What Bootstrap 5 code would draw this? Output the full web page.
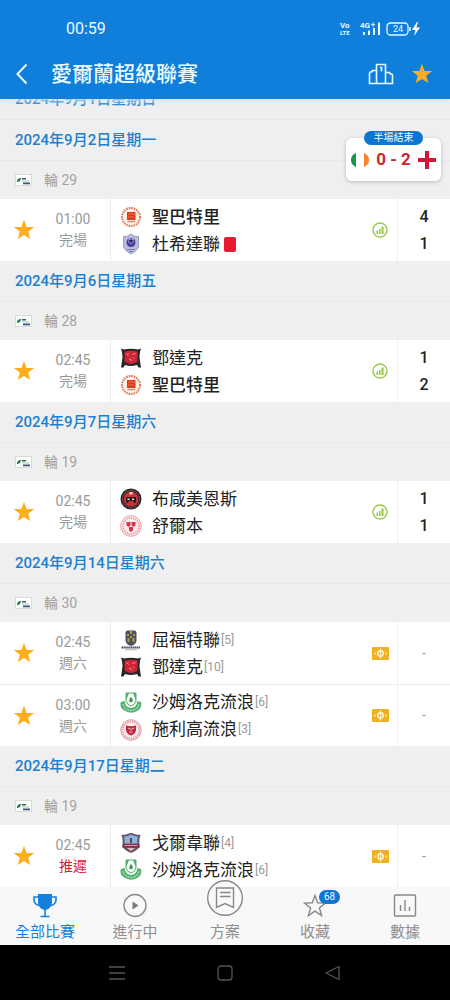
<!DOCTYPE html>
<html lang="zh-Hant">
<head>
<meta charset="utf-8">
<meta name="viewport" content="width=device-width, initial-scale=1">
<title>愛爾蘭超級聯賽</title>
<link href="https://cdn.jsdelivr.net/npm/bootstrap@5.3.0/dist/css/bootstrap.min.css" rel="stylesheet">
<style>
  body { font-family: Roboto, "Noto Sans CJK TC", sans-serif; color: #222; background: #fff; height: 100vh; overflow: hidden; }
  svg { display: block; flex: none; }
  button { background: none; border: 0; padding: 0; color: inherit; }
  a { color: inherit; text-decoration: none; }
  .topbar { background: #0f7fdb; color: #e9fbff; box-shadow: 0 2px 6px #cfe5f7; z-index: 3; }
  .statusbar { height: 58px; padding: 0 28px 0 66px; font-size: 16px; }
  .titlebar { height: 41px; padding: 0 16px 10px; }
  .titlebar h1 { font-size: 21px; line-height: 30px; font-weight: 500; padding-left: 15px; }
  .feed { min-height: 0; }
  .day { height: 41px; padding: 0 15px; background: #efefef; border-bottom: 1px solid #e9e9e9; color: #1c80cf; font-size: 15px; font-weight: 500; margin: 0; flex: none; }
  .round { height: 38px; padding: 0 15px; background: #efefef; color: #a2a2a2; font-size: 14px; gap: 12px; flex: none; }
  .fixture { height: 62px; background: #fff; flex: none; }
  .fixture + .fixture { border-top: 1px solid #eee; }
  .fav { width: 48px; }
  .when { width: 50px; color: #999; font-size: 14px; line-height: 21px; }
  .late { color: #e0182d; }
  .teams { border-left: 1px solid #eee; margin-left: 12px; padding: 1px 0 0 9px; min-width: 0; }
  .team { height: 27px; font-size: 17px; line-height: 27px; gap: 10px; white-space: nowrap; }
  .team.won { font-weight: 500; }
  .rank { color: #999; font-size: 12px; margin-left: -9px; font-weight: 400; }
  .redcard { width: 12px; height: 15px; border-radius: 2px; background: #e31b33; margin-left: -6px; }
  .info { width: 34px; }
  .score { width: 53px; border-left: 1px solid #f0f0f0; font-size: 16px; line-height: 27px; font-weight: 500; }
  .pending { color: #999; font-size: 14px; font-weight: 400; }
  .live { position: absolute; right: 9px; top: 39px; width: 95px; height: 43px; background: #fff; border-radius: 6px; box-shadow: 0 1px 4px #bbb; z-index: 2; }
  .live-score { color: #c62834; font-size: 17px; font-weight: 700; white-space: nowrap; }
  .live-state { position: absolute; top: -7px; left: 18px; right: 18px; height: 14px; line-height: 14px; border-radius: 7px; background: #0f76cf; color: #e9fbff; font-size: 10px; text-align: center; }
  .tabs { background: #f8f8f8; height: 58px; color: #8e8e8e; font-size: 15px; z-index: 2; }
  .tabs a { flex: 1 1 0; line-height: 20px; padding-bottom: 3px; position: relative; }
  .tabs .picked { color: #1280dc; }
  .tabs svg { margin-bottom: 4px; }
  .count { position: absolute; left: 50%; top: 3px; margin-left: 4px; width: 21px; height: 14px; line-height: 14px; border-radius: 7px; background: #0f76cf; color: #e9fbff; font-size: 10px; text-align: center; }
  .sysnav { background: #000; height: 55px; color: #555; }
  .sysnav button { width: 24px; margin: 0 42px; }
</style>
</head>
<body class="d-flex flex-column">

<svg width="0" height="0" class="position-absolute" aria-hidden="true">
  <symbol id="star" viewBox="0 0 22 22"><path fill="#fcae1c" d="M11 .8l2.600 7.100 7.600.2-6 4.700 2.100 7.300L11 15.900l-6.300 4.200 2.100-7.300-6-4.700 7.600-.2z"/></symbol>
  <symbol id="league" viewBox="0 0 17 12"><rect x=".5" y=".5" width="16" height="11" fill="#fcfffc" stroke="#d8ded4"/><path fill="#177b42" d="M2 8q0-4 4-4-.5 4-4 4z"/><path fill="#456" d="M7 4h4v1.500H7z"/><path fill="#a9c9b5" d="M7 6.500h7v1H7z"/><path fill="#3c4f92" d="M8 8.500h7v1.800H8z"/></symbol>
  <symbol id="stats" viewBox="0 0 16 16"><circle cx="8" cy="8" r="7" fill="none" stroke="#9ccb4f" stroke-width="1.400"/><path fill="#8fc63d" d="M4.500 8.500h1.500V12H4.500zM7 7h1.500v5H7zM9.500 4.500h2V12h-2z"/></symbol>
  <symbol id="odds" viewBox="0 0 17 13"><rect width="17" height="13" rx="1" fill="#f0b023"/><circle cx="8.500" cy="6.500" r="2.700" fill="none" stroke="#fff3c8" stroke-width="1.500"/><path d="M8.500 1.500v10M3 5.500v2M14 5.500v2" stroke="#fff3c8" stroke-width="1.300"/></symbol>
  <symbol id="patrick" viewBox="0 0 22 22"><circle cx="11" cy="11" r="10.300" fill="#fdeee6"/><circle cx="11" cy="11" r="9" fill="none" stroke="#e2765c" stroke-width="2" stroke-dasharray="1.500 1"/><path fill="#dd3a22" d="M7 6h8.500v8H7z"/><path d="M8 8.500l3-1 4 1M8 11h6" stroke="#f38a55" stroke-width=".7" fill="none"/><path fill="#e47a60" d="M7.500 15h7.500v1.200H7.500z"/></symbol>
  <symbol id="drogheda" viewBox="0 0 22 22"><path fill="#b9bbe3" stroke="#98a0b4" d="M3.500 3.500Q8 4 11 1q3 3 7.500 2.500V14q-1.500 4-7.500 7-6-3-7.500-7z"/><circle cx="11" cy="9.500" r="4.500" fill="#473a94"/><circle cx="11" cy="8" r="2.700" fill="#c9c5ee"/><path fill="#3a2876" d="M11 5l1 2 2 .2-1.500 1.300.5 2-2-1-2 1 .5-2L8 7.200 10 7z"/><path stroke="#777bb0" d="M7 16.500h8M9 18.500h4"/></symbol>
  <symbol id="dundalk" viewBox="0 0 22 22"><path fill="#29262a" d="M1 1.500l3 1q7-1.500 14 0l3-1-1 3.500q-1 5 0 9l1 6.500h-2.500L17 18q-6 2-12 0l-1.500 2.500H1L2 14q1-4 0-9z"/><path fill="#cf2637" d="M4.500 4.500q6.500-1.500 13 0v9.500q-1 2-6.500 3-5.500-1-6.500-3z"/><path stroke="#f29a9d" fill="none" d="M6.500 6.500l2 2M8.500 6.500l-1.500 1.500M12.500 7.500l3-1M9 12l3 1.500M13 10.500l1 1"/></symbol>
  <symbol id="bohs" viewBox="0 0 22 22"><circle cx="11" cy="11" r="10.500" fill="#30272a"/><circle cx="11" cy="11" r="8.500" fill="none" stroke="#a35a57" stroke-dasharray="1.500 1"/><circle cx="11" cy="11" r="7.300" fill="#d32f37"/><path fill="#211f22" d="M6 9h10v5.500l-2 .5-1-2H9l-1 2-2-.5z"/><path fill="#f6d5d2" d="M9.500 4h3v2.500h-3zM7.500 10.500h2v1.500h-2zM12 10.500h2v1.500h-2z"/></symbol>
  <symbol id="shels" viewBox="0 0 22 22"><circle cx="11" cy="11" r="10.300" fill="#fdeced" stroke="#ee9ba2"/><circle cx="11" cy="11" r="8" fill="none" stroke="#ea858e" stroke-width="1.500" stroke-dasharray="1.200 1"/><path fill="#d3364b" d="M6.500 7h4v3.500l-2 1.500-2-1.500zM11.500 7h4v3.500l-2 1.500-2-1.500zM9 12h4v3.500L11 17l-2-1.500z"/></symbol>
  <symbol id="waterford" viewBox="0 0 22 22"><path fill="#4d5061" d="M5.500 3L7 1.500h8L16.500 3v9q-1 4-5.500 5-4.500-1-5.500-5z"/><path fill="#b29a4b" d="M7 5h2v2H7zM13 5h2v2h-2zM10 2h2v3h-2zM7.500 9h2v4h-2zM12.500 9h2v4h-2zM10 7h2v2h-2z"/><path stroke="#4e5263" stroke-width="1.800" stroke-dasharray="1.500 .4" d="M1.500 18.500h19"/><path stroke="#aeb4c2" d="M5 20.700h12"/></symbol>
  <symbol id="rovers" viewBox="0 0 22 22"><path fill="#f4fff5" stroke="#54aa6e" d="M6 1h10v8q-1 4-5 5-4-1-5-5z"/><path fill="#4fae69" d="M6 1h3L7.500 5 6 8zM13 1h3v7l-1.500-3z"/><path fill="#3d8e55" d="M9.500 7l1.500-2 1.500 2v3h-3z"/><path fill="#57b473" d="M.8 10l4-1q0 6 6.200 7 6.200-1 6.200-7l4 1q1 6-4 9-6 3.500-12 0-6-3-4.400-9z"/><path stroke="#e7fbea" stroke-dasharray="1.500 1" fill="none" d="M3 12.500q2 6 8 6t8-6"/></symbol>
  <symbol id="sligo" viewBox="0 0 22 22"><circle cx="11" cy="11" r="10.300" fill="#fcebed" stroke="#dda0a7"/><circle cx="11" cy="11" r="8.500" fill="none" stroke="#d9858f" stroke-width="1.800" stroke-dasharray="1.200 1.200"/><path fill="#c4263d" d="M6 6.500q5 1.500 10 0v5q-1 4-5 5-4-1-5-5z"/><path stroke="#f0c4c6" fill="none" d="M8 9l3 1.500L14 9M9.500 13h3"/></symbol>
  <symbol id="galway" viewBox="0 0 22 22"><path fill="#6d5165" d="M1.500 3Q6 3 11 .8 16 3 20.500 3q-2 5-.5 12-4 4-9 6-5-2-9-6 1.500-7-.5-12z"/><path fill="#86b6df" d="M4 4.500q4 0 7-2 3 2 7 2-1 3-.5 7H4.500q.5-4-.5-7z"/><path fill="#8d2e49" d="M3 12h16v3.500H3zM10 6h2v5h-2z"/><path fill="#e2bcc6" d="M7 16h8l-4 3zM4.500 13.300h13v.8h-13z"/></symbol>
</svg>

<header class="topbar position-relative flex-shrink-0">
  <div class="statusbar d-flex align-items-center justify-content-between">
    <span>00:59</span>
    <svg width="82" height="16" viewBox="0 0 82 16" fill="none" stroke="#e9fbff" role="img" aria-label="VoLTE 4G+ 24%">
      <g fill="#e9fbff" stroke="none" font-family="Roboto" font-weight="700"><text x="0" y="7" font-size="8">Vo</text><text x="0" y="14" font-size="6">LTE</text><text x="20" y="7" font-size="8">4G</text><text x="31" y="6" font-size="7">+</text><text x="53" y="11" font-size="9" font-weight="400">24</text></g>
      <path stroke-width="2" d="M24 14v-3M29 14V9.500M34 14V7M39 14V1.500"/>
      <rect x="47" y="2" width="21" height="12" rx="3.500" stroke-width="1.300"/><path stroke-width="1.500" d="M70 6v4"/>
      <path fill="#fff" stroke="none" d="M77 1l-5 8h3.500L74 15l6-8.500h-3.600L78 1z"/>
    </svg>
  </div>
  <div class="titlebar d-flex align-items-center">
    <button type="button" aria-label="返回"><svg width="20" height="22" viewBox="0 0 20 22" fill="none" stroke="#e9fbff" stroke-width="2"><path d="M10.500 1.500L1.500 11l9 9.500"/></svg></button>
    <h1 class="mb-0 me-auto">愛爾蘭超級聯賽</h1>
    <button type="button" aria-label="排名" class="me-3"><svg width="26" height="22" viewBox="0 0 26 22" fill="none" stroke="#e9fbff" stroke-width="1.600"><path d="M8.500 20.500V1.500h9v19M8.500 7.500H4.500q0 1.500-2 1.500-1 0-1 1v10.500h23V12q0-1-1-1-2 0-2-1.500h-4M12 4.500h1.500v4"/></svg></button>
    <button type="button" aria-label="已收藏"><svg width="24" height="22"><use href="#star"/></svg></button>
  </div>
</header>

<main class="feed flex-grow-1 position-relative d-flex">
  <aside class="live d-flex align-items-center justify-content-between px-1">
    <span class="live-state">半場結束</span>
    <svg width="20" height="20" viewBox="0 0 20 20"><path fill="#17964e" d="M6 3v14Q1 15 1 10t5-7z"/><path fill="#f3892f" d="M14 3v14q5-2 5-7t-5-7z"/></svg>
    <span class="live-score">0 - 2</span>
    <svg width="20" height="20" viewBox="0 0 20 20"><path fill="#d31635" d="M8 1h4v7h7v4h-7v7H8v-7H1V8h7z"/></svg>
  </aside>

  <div class="flex-grow-1 overflow-hidden d-flex flex-column justify-content-end">
    <h2 class="day d-flex align-items-center">2024年9月1日星期日</h2>

    <h2 class="day d-flex align-items-center">2024年9月2日星期一</h2>
    <div class="round d-flex align-items-center"><svg width="17" height="12"><use href="#league"/></svg>輪 29</div>
    <article class="fixture d-flex align-items-center">
      <button type="button" class="fav d-flex justify-content-center" aria-label="收藏"><svg width="22" height="22"><use href="#star"/></svg></button>
      <div class="when text-center">01:00<br>完場</div>
      <div class="teams flex-grow-1 align-self-stretch d-flex flex-column justify-content-center">
        <div class="team won d-flex align-items-center"><svg width="22" height="22"><use href="#patrick"/></svg>聖巴特里</div>
        <div class="team d-flex align-items-center"><svg width="22" height="22"><use href="#drogheda"/></svg>杜希達聯<span class="redcard"></span></div>
      </div>
      <div class="info d-flex justify-content-center"><svg width="16" height="16"><use href="#stats"/></svg></div>
      <div class="score align-self-stretch d-flex flex-column justify-content-center text-center"><span>4</span><span>1</span></div>
    </article>

    <h2 class="day d-flex align-items-center">2024年9月6日星期五</h2>
    <div class="round d-flex align-items-center"><svg width="17" height="12"><use href="#league"/></svg>輪 28</div>
    <article class="fixture d-flex align-items-center">
      <button type="button" class="fav d-flex justify-content-center" aria-label="收藏"><svg width="22" height="22"><use href="#star"/></svg></button>
      <div class="when text-center">02:45<br>完場</div>
      <div class="teams flex-grow-1 align-self-stretch d-flex flex-column justify-content-center">
        <div class="team d-flex align-items-center"><svg width="22" height="22"><use href="#dundalk"/></svg>鄧達克</div>
        <div class="team won d-flex align-items-center"><svg width="22" height="22"><use href="#patrick"/></svg>聖巴特里</div>
      </div>
      <div class="info d-flex justify-content-center"><svg width="16" height="16"><use href="#stats"/></svg></div>
      <div class="score align-self-stretch d-flex flex-column justify-content-center text-center"><span>1</span><span>2</span></div>
    </article>

    <h2 class="day d-flex align-items-center">2024年9月7日星期六</h2>
    <div class="round d-flex align-items-center"><svg width="17" height="12"><use href="#league"/></svg>輪 19</div>
    <article class="fixture d-flex align-items-center">
      <button type="button" class="fav d-flex justify-content-center" aria-label="收藏"><svg width="22" height="22"><use href="#star"/></svg></button>
      <div class="when text-center">02:45<br>完場</div>
      <div class="teams flex-grow-1 align-self-stretch d-flex flex-column justify-content-center">
        <div class="team d-flex align-items-center"><svg width="22" height="22"><use href="#bohs"/></svg>布咸美恩斯</div>
        <div class="team d-flex align-items-center"><svg width="22" height="22"><use href="#shels"/></svg>舒爾本</div>
      </div>
      <div class="info d-flex justify-content-center"><svg width="16" height="16"><use href="#stats"/></svg></div>
      <div class="score align-self-stretch d-flex flex-column justify-content-center text-center"><span>1</span><span>1</span></div>
    </article>

    <h2 class="day d-flex align-items-center">2024年9月14日星期六</h2>
    <div class="round d-flex align-items-center"><svg width="17" height="12"><use href="#league"/></svg>輪 30</div>
    <article class="fixture d-flex align-items-center">
      <button type="button" class="fav d-flex justify-content-center" aria-label="收藏"><svg width="22" height="22"><use href="#star"/></svg></button>
      <div class="when text-center">02:45<br>週六</div>
      <div class="teams flex-grow-1 align-self-stretch d-flex flex-column justify-content-center">
        <div class="team d-flex align-items-center"><svg width="22" height="22"><use href="#waterford"/></svg>屈福特聯<span class="rank">[5]</span></div>
        <div class="team d-flex align-items-center"><svg width="22" height="22"><use href="#dundalk"/></svg>鄧達克<span class="rank">[10]</span></div>
      </div>
      <div class="info d-flex justify-content-center"><svg width="17" height="13"><use href="#odds"/></svg></div>
      <div class="score pending align-self-stretch d-flex flex-column justify-content-center text-center">-</div>
    </article>
    <article class="fixture d-flex align-items-center">
      <button type="button" class="fav d-flex justify-content-center" aria-label="收藏"><svg width="22" height="22"><use href="#star"/></svg></button>
      <div class="when text-center">03:00<br>週六</div>
      <div class="teams flex-grow-1 align-self-stretch d-flex flex-column justify-content-center">
        <div class="team d-flex align-items-center"><svg width="22" height="22"><use href="#rovers"/></svg>沙姆洛克流浪<span class="rank">[6]</span></div>
        <div class="team d-flex align-items-center"><svg width="22" height="22"><use href="#sligo"/></svg>施利高流浪<span class="rank">[3]</span></div>
      </div>
      <div class="info d-flex justify-content-center"><svg width="17" height="13"><use href="#odds"/></svg></div>
      <div class="score pending align-self-stretch d-flex flex-column justify-content-center text-center">-</div>
    </article>

    <h2 class="day d-flex align-items-center">2024年9月17日星期二</h2>
    <div class="round d-flex align-items-center"><svg width="17" height="12"><use href="#league"/></svg>輪 19</div>
    <article class="fixture d-flex align-items-center">
      <button type="button" class="fav d-flex justify-content-center" aria-label="收藏"><svg width="22" height="22"><use href="#star"/></svg></button>
      <div class="when text-center">02:45<br><span class="late">推遲</span></div>
      <div class="teams flex-grow-1 align-self-stretch d-flex flex-column justify-content-center">
        <div class="team d-flex align-items-center"><svg width="22" height="22"><use href="#galway"/></svg>戈爾韋聯<span class="rank">[4]</span></div>
        <div class="team d-flex align-items-center"><svg width="22" height="22"><use href="#rovers"/></svg>沙姆洛克流浪<span class="rank">[6]</span></div>
      </div>
      <div class="info d-flex justify-content-center"><svg width="17" height="13"><use href="#odds"/></svg></div>
      <div class="score pending align-self-stretch d-flex flex-column justify-content-center text-center">-</div>
    </article>
  </div>
</main>

<nav class="tabs d-flex flex-shrink-0 position-relative">
  <a href="#" class="picked d-flex flex-column align-items-center justify-content-end"><svg width="24" height="25" viewBox="0 0 24 25"><path fill="#1280dc" d="M5 1h14v9q-1 6-7 7-6-1-7-7z"/><path fill="none" stroke="#1280dc" stroke-width="1.600" d="M5 4H1v3q0 4 5 5.500M19 4h4v3q0 4-5 5.500M12 16v7M7.500 23.500h9"/></svg>全部比賽</a>
  <a href="#" class="d-flex flex-column align-items-center justify-content-end"><svg width="24" height="25" viewBox="0 0 24 25"><circle cx="12" cy="12.500" r="11" fill="none" stroke="#8a8a8a" stroke-width="1.400"/><path fill="#777" d="M9.500 8.500l6 4-6 4z"/></svg>進行中</a>
  <a href="#" class="d-flex flex-column align-items-center justify-content-end"><svg width="38" height="38" viewBox="0 0 38 38" fill="none" stroke="#888" stroke-width="1.400"><circle cx="19" cy="18" r="17.300" fill="#fafafa"/><path d="M10.500 8h17v19.500L19 23.500l-8.500 4zM14 12.500h10.500M14 16.500h10.500"/></svg>方案</a>
  <a href="#" class="d-flex flex-column align-items-center justify-content-end"><svg width="24" height="25" viewBox="0 0 24 25"><path fill="none" stroke="#888" stroke-width="1.400" d="M12 2.500l2.700 7.200 7.800.4-6.100 4.800 2.200 7.600-6.600-4.400-6.600 4.400 2.200-7.600L1.500 10.100l7.800-.4z"/></svg><span class="count">68</span>收藏</a>
  <a href="#" class="d-flex flex-column align-items-center justify-content-end"><svg width="24" height="25" viewBox="0 0 24 25" fill="none" stroke="#888" stroke-width="1.400"><rect x="1.500" y="2" width="21" height="21" rx="1"/><path d="M7.500 18v-6M12 18V7M16.500 18v-4"/></svg>數據</a>
</nav>

<div class="sysnav d-flex align-items-center justify-content-center flex-shrink-0">
  <button type="button" aria-label="選單"><svg width="24" height="18" viewBox="0 0 24 18" stroke="currentColor" stroke-width="1.300"><path d="M4 3h16M4 9h16M4 15h16"/></svg></button>
  <button type="button" aria-label="主畫面"><svg width="24" height="18" viewBox="0 0 24 18" fill="none" stroke="currentColor" stroke-width="1.300"><rect x="5" y="2" width="14" height="14" rx="3"/></svg></button>
  <button type="button" aria-label="上一頁"><svg width="24" height="18" viewBox="0 0 24 18" fill="none" stroke="currentColor" stroke-width="1.300"><path stroke-linejoin="round" d="M18 2.500v13L5 9z"/></svg></button>
</div>

<script src="https://cdn.jsdelivr.net/npm/bootstrap@5.3.0/dist/js/bootstrap.bundle.min.js"></script>
</body>
</html>
